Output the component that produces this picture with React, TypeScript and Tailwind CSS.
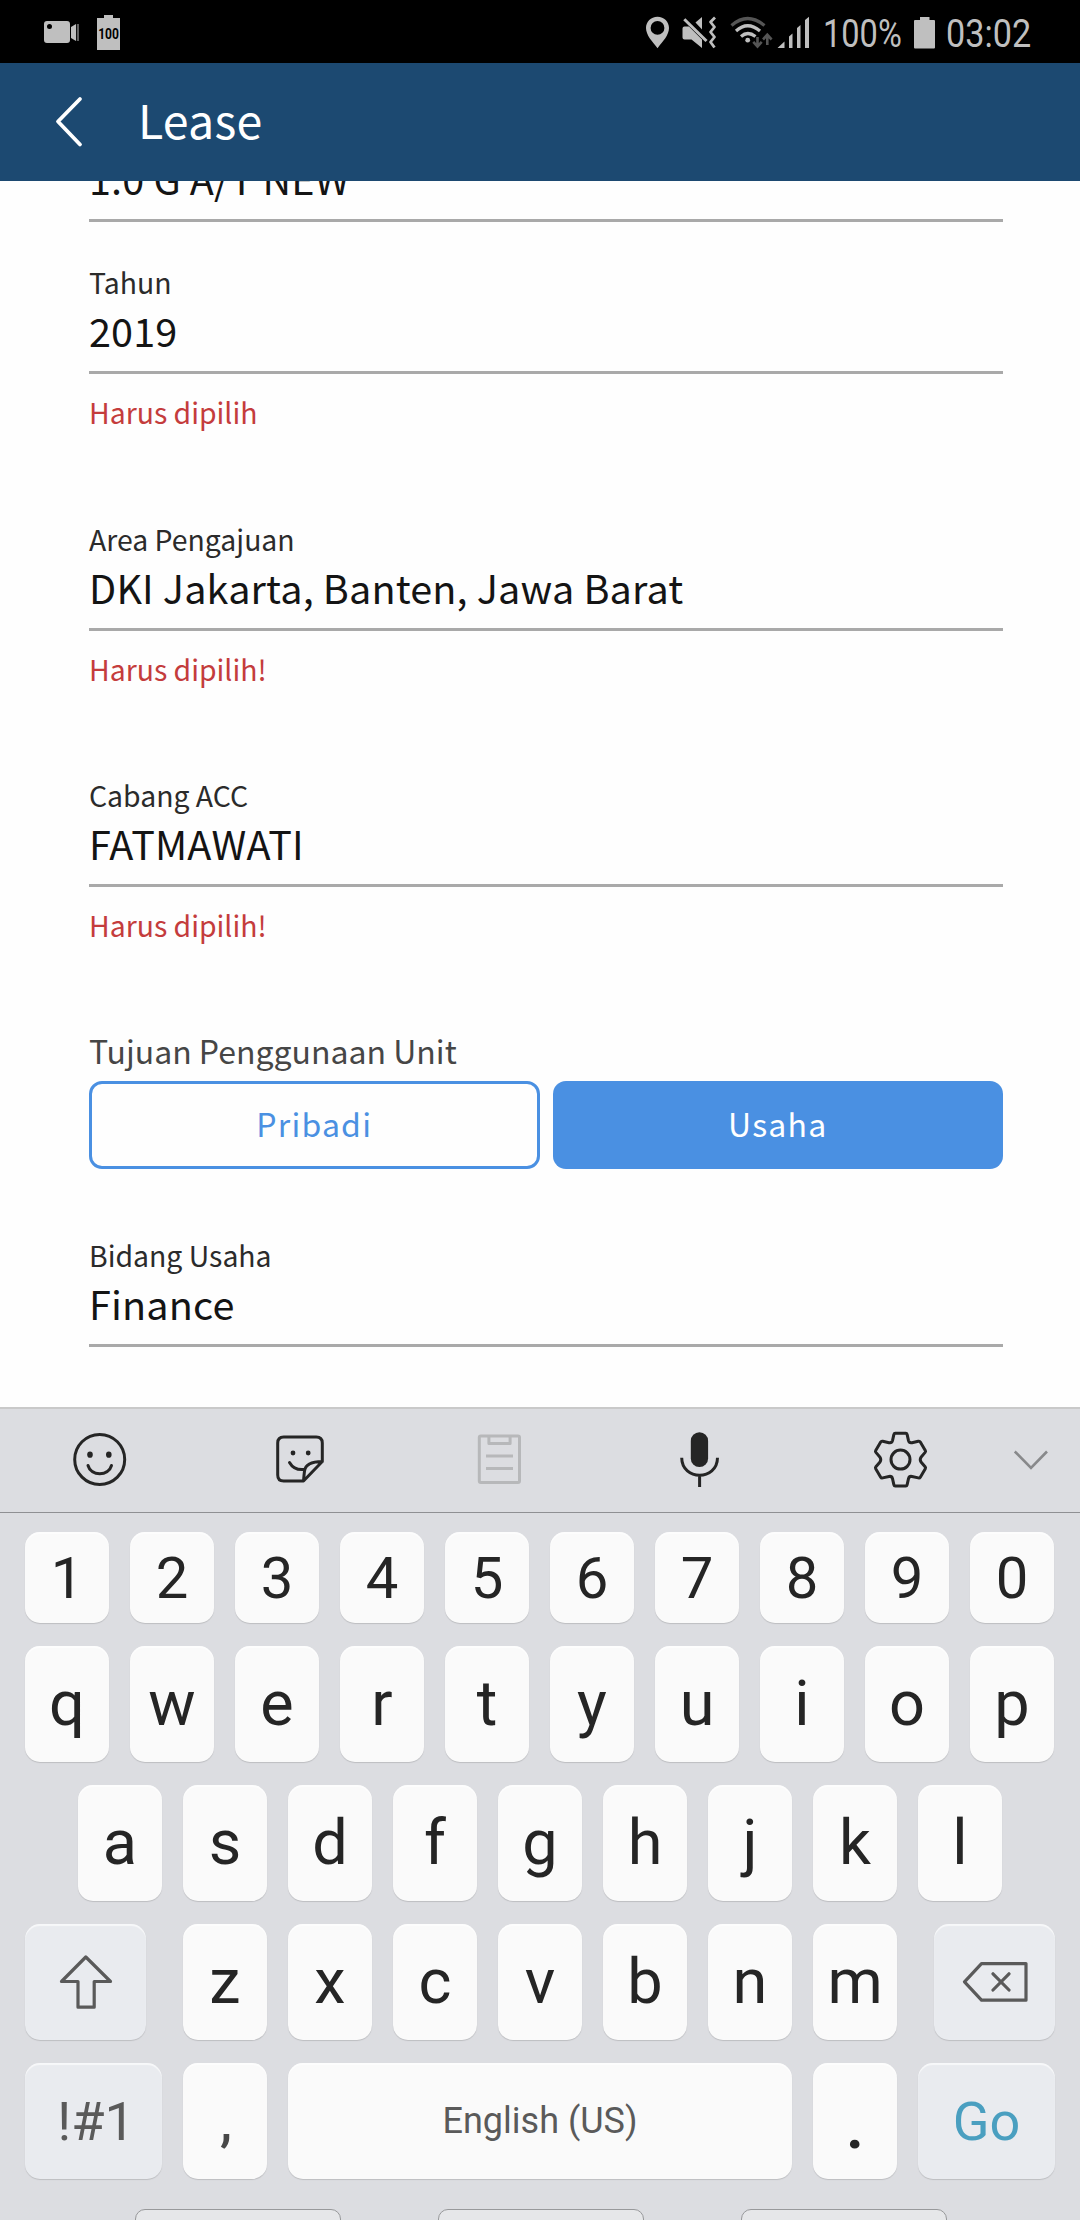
import React from 'react';
import type { ReactNode } from 'react';

const FIELD_FONT = 'font-["Noto_Sans_CJK_SC",sans-serif]';

function StatusBar() {
  return (
    <div className="flex h-[63px] w-full shrink-0 items-start bg-black text-[#bfbfbf]">
      <svg className="ml-[44px] mt-[15px] shrink-0" width="36" height="36" viewBox="0 0 36 36" fill="currentColor">
        <path fillRule="evenodd" d="M3 6H23Q26 6 26 9V25Q26 28 23 28H3Q0 28 0 25V9Q0 6 3 6ZM5.5 9A2.5 2.5 0 1 0 5.5 14A2.5 2.5 0 1 0 5.5 9Z" />
        <path d="M27 12L32 9V26L27 23Z" />
        <path d="M32.8 9H35V26H32.8Z" opacity=".5" />
      </svg>
      <div className="relative ml-[17px] mt-[15px] h-[35px] w-[23px] shrink-0">
        <svg className="absolute inset-0" width="23" height="35" viewBox="0 0 23 35" fill="currentColor">
          <path d="M7 0H16V3H23V35H0V3H7Z" />
        </svg>
        <span className="absolute left-[-8px] top-[9px] w-[39px] scale-x-[.86] text-center font-[Roboto,sans-serif] text-[14px] font-bold leading-[21px] text-black">100</span>
      </div>
      <div className="ml-auto mr-[50px] flex h-[63px] w-[384px] items-start">
        <svg className="mt-[15px] shrink-0" width="177" height="36" viewBox="646 15 177 36" fill="none" stroke="none">
          <path fill="currentColor" fillRule="evenodd" d="M657.5 16.8C650.8 16.8 646 21.8 646 28.1C646 35 652 41.5 657.5 48.2C663 41.5 669 35 669 28.1C669 21.8 664.2 16.8 657.5 16.8ZM657.5 21A6.9 6.9 0 1 1 657.5 34.8A6.9 6.9 0 1 1 657.5 21Z" />
          <path fill="currentColor" d="M684.5 26.5H689L702 39.5V48L691.5 39.5H684.5Q682.5 39.5 682.5 37.5V28.5Q682.5 26.5 684.5 26.5Z" />
          <path fill="currentColor" d="M695.5 22.5L702 17V29.5Z" />
          <path stroke="currentColor" strokeWidth="3" d="M684.3 19.2L706.5 41" />
          <path stroke="currentColor" strokeWidth="2.8" strokeLinejoin="round" d="M715 17.5L710.5 22L714.5 27L710.5 32L714.5 37L710.5 42L714.5 47.5" />
          <g strokeWidth="3.2">
            <path stroke="#555" d="M731.5 25.5Q747.5 11.5 764.5 25.5" />
            <path stroke="currentColor" d="M736 31Q747.5 20.5 760 31" />
            <path stroke="currentColor" d="M741 36.5Q747.7 30.5 755.5 36.5" />
          </g>
          <circle cx="747.7" cy="40.2" r="2.4" fill="currentColor" />
          <path stroke="#555" strokeWidth="2.6" d="M757.5 37V46M753.3 41.8L757.5 46.5L761.7 41.8M767.3 45V35.5M763 39.5L767.3 34.8L771.6 39.5" />
          <path fill="currentColor" d="M777.5 48L784.5 41.5V48ZM789 48V36.5L792.5 33.5V48ZM797 48V28L800.5 25V48ZM805 48V20L809 16.7V48Z" />
        </svg>
        <div className="mt-[9px] w-[84px] shrink-0">
          <span className="block w-[120px] origin-left scale-x-[.835] whitespace-nowrap font-[Roboto,sans-serif] text-[39px] leading-[50px]">100%</span>
        </div>
        <svg className="ml-[7px] mt-[16px] shrink-0" width="21" height="33" viewBox="0 0 21 33" fill="currentColor">
          <path d="M6 1H15.5V4H20Q21 4 21 5V31.5Q21 32.5 20 32.5H1Q0 32.5 0 31.5V5Q0 4 1 4H6Z" />
        </svg>
        <div className="ml-[11px] mt-[9px] w-[84px] shrink-0">
          <span className="block w-[120px] origin-left scale-x-[.877] whitespace-nowrap font-[Roboto,sans-serif] text-[39px] leading-[50px]">03:02</span>
        </div>
      </div>
    </div>
  );
}

function Header() {
  return (
    <header className="flex h-[118px] w-full shrink-0 items-start bg-[#1c4971] text-white">
      <svg className="ml-[52px] mt-[29px] shrink-0" width="34" height="60" viewBox="0 0 34 60" fill="none" stroke="currentColor" strokeWidth="3.8" strokeLinecap="round" strokeLinejoin="round">
        <path d="M28 7L6 29.5L28 52.5" />
      </svg>
      <h1 className={`${FIELD_FONT} ml-[52px] mt-[26px] text-[46.5px] leading-[60px] tracking-[.2px]`}>Lease</h1>
    </header>
  );
}

function Field({ label, value, error, className }: { label: string; value: string; error?: string; className: string }) {
  return (
    <div className={className}>
      <div className="h-[39px] text-[28.4px] leading-[39px] text-[#2b2b2b]">{label}</div>
      <div className="h-[73px] border-b-[3px] border-[#a9a9a9] text-[39.6px] leading-[58px] tracking-[.15px] text-[#141414]">{value}</div>
      {error && <div className="mt-[18px] text-[28.4px] leading-[40px] text-[#c43c3c]">{error}</div>}
    </div>
  );
}

function LeaseForm() {
  return (
    <main className={`${FIELD_FONT} h-[1226px] w-full shrink-0 overflow-hidden bg-[#fefefe] pl-[89px] pr-[77px]`}>
      <div className="-mt-[32px] h-[73px] border-b-[3px] border-[#a9a9a9] text-[39.6px] leading-[58px] tracking-[.15px] text-[#141414]">1.0 G A/T NEW</div>
      <Field className="mt-[40px] h-[257px]" label="Tahun" value="2019" error="Harus dipilih" />
      <Field className="h-[256px]" label="Area Pengajuan" value="DKI Jakarta, Banten, Jawa Barat" error="Harus dipilih!" />
      <Field className="h-[253px]" label="Cabang ACC" value="FATMAWATI" error="Harus dipilih!" />
      <div className="text-[32px] leading-[44px] text-[#464646]">Tujuan Penggunaan Unit</div>
      <div className="mt-[9px] grid h-[88px] grid-cols-2 gap-[13px] text-[32px] tracking-[1.2px]">
        <button className="rounded-[13px] border-[3px] border-[#4a90e2] pb-[4px] text-[#4a90e2]">Pribadi</button>
        <button className="rounded-[13px] bg-[#4a90e2] pb-[4px] text-white">Usaha</button>
      </div>
      <Field className="mt-[66px]" label="Bidang Usaha" value="Finance" />
    </main>
  );
}

function ToolbarIcon({ children, className }: { children: ReactNode; className: string }) {
  return (
    <div className="flex w-[200px] shrink-0 justify-center">
      <svg className={className} width="60" height="60" viewBox="0 0 60 60" fill="none" stroke="currentColor" strokeWidth="3" strokeLinecap="round" strokeLinejoin="round">
        {children}
      </svg>
    </div>
  );
}

function Toolbar() {
  return (
    <div className="flex h-[106px] w-full border-b border-t-2 border-b-[#8f9093] border-t-[#c9c9c9] pt-[21px]">
      <ToolbarIcon className="text-[#252525]">
        <circle cx="29.7" cy="29.4" r="25" />
        <ellipse cx="20" cy="24.7" rx="2.8" ry="3.1" fill="currentColor" stroke="none" />
        <ellipse cx="38.8" cy="24.7" rx="2.8" ry="3.1" fill="currentColor" stroke="none" />
        <path d="M18 35.5C21 46.5 38.5 46.5 41.5 35.5" />
      </ToolbarIcon>
      <ToolbarIcon className="text-[#252525]">
        <path d="M52.3 31.5V13Q52.3 7 46.3 7H13.7Q7.7 7 7.7 13V45Q7.7 51 13.7 51H33.5L52.3 31.5C42 31.5 35.5 34 34.5 41Q34 45 33.5 51" />
        <circle cx="23" cy="23" r="2.4" fill="currentColor" stroke="none" />
        <circle cx="38.2" cy="23" r="2.4" fill="currentColor" stroke="none" />
        <path d="M19.5 32.5Q24 40.5 34 39.5" />
      </ToolbarIcon>
      <ToolbarIcon className="text-[#b7b8ba]">
        <rect x="9.3" y="6" width="40.2" height="46.5" rx="1.5" />
        <path strokeLinecap="butt" d="M18.9 6V13.5H40.1V6M16 26H43M16 38.5H43" />
      </ToolbarIcon>
      <ToolbarIcon className="text-[#252525]">
        <rect x="20.8" y="2.3" width="17.3" height="34.7" rx="8.6" fill="currentColor" stroke="none" />
        <path strokeLinecap="butt" d="M11.7 27.7C12 51 47.2 51 47.5 27.7M29.6 45V57" />
      </ToolbarIcon>
      <ToolbarIcon className="text-[#252525]">
        <g transform="translate(30.5 29.6)">
          <path d="M-5.3 -26.3H5.3Q6.3 -26.3 6.6 -25.2L8 -19Q8.8 -16.3 11.5 -16.9L17.8 -18.3Q19.2 -18.6 19.8 -17.6L24.8 -9.2Q25.4 -8.2 24.6 -7.2L20.5 -2.4Q19 0 20.5 2.4L24.6 7.2Q25.4 8.2 24.8 9.2L19.8 17.6Q19.2 18.6 17.8 18.3L11.5 16.9Q8.8 16.3 8 19L6.6 25.2Q6.3 26.3 5.3 26.3H-5.3Q-6.3 26.3 -6.6 25.2L-8 19Q-8.8 16.3 -11.5 16.9L-17.8 18.3Q-19.2 18.6 -19.8 17.6L-24.8 9.2Q-25.4 8.2 -24.6 7.2L-20.5 2.4Q-19 0 -20.5 -2.4L-24.6 -7.2Q-25.4 -8.2 -24.8 -9.2L-19.8 -17.6Q-19.2 -18.6 -17.8 -18.3L-11.5 -16.9Q-8.8 -16.3 -8 -19L-6.6 -25.2Q-6.3 -26.3 -5.3 -26.3Z" />
          <circle r="9.5" />
        </g>
      </ToolbarIcon>
      <svg className="shrink-0 text-[#88898b]" width="62" height="60" viewBox="0 0 62 60" fill="none" stroke="currentColor" strokeWidth="2.6">
        <path d="M14.8 21.5L31 38L47 21.5" />
      </svg>
    </div>
  );
}

function Key({ children, className = 'w-[84px] bg-[#fafafa] text-[63px] text-[#252525]' }: { children: ReactNode; className?: string }) {
  return (
    <button className={`flex h-full shrink-0 items-center justify-center rounded-[15px] shadow-[inset_0_2px_1px_rgba(255,255,255,.65),0_1px_1px_rgba(0,0,0,.14)] ${className}`}>
      {children}
    </button>
  );
}

function Letters({ letters }: { letters: string }) {
  return (
    <div className="flex h-full gap-[21px]">
      {letters.split('').map((letter) => (
        <Key key={letter}>
          <span className="leading-[74px]">{letter}</span>
        </Key>
      ))}
    </div>
  );
}

function Keyboard() {
  return (
    <section className="h-[813px] w-full shrink-0 overflow-hidden bg-[#dcdde1] font-[Roboto,sans-serif]">
      <Toolbar />
      <div className="mt-[19px] flex flex-col gap-[23px] pl-[25px]">
        <div className="flex h-[91px] gap-[21px]">
          {'1234567890'.split('').map((digit) => (
            <Key key={digit} className="w-[84px] bg-[#fafafa] text-[58px] text-[#252525]">
              <span className="leading-[68px]">{digit}</span>
            </Key>
          ))}
        </div>
        <div className="h-[116px]">
          <Letters letters="qwertyuiop" />
        </div>
        <div className="h-[116px] pl-[53px]">
          <Letters letters="asdfghjkl" />
        </div>
        <div className="flex h-[116px] gap-[37px]">
          <Key className="w-[121px] bg-[#e9ebef] text-[#5a5a5a]">
            <svg width="60" height="60" viewBox="0 0 60 60" fill="none" stroke="currentColor" strokeWidth="3.2" strokeLinejoin="round">
              <path d="M29.8 5L5.5 29.5H22V55.2H38.2V29.5H54.5Z" />
            </svg>
          </Key>
          <Letters letters="zxcvbnm" />
          <Key className="w-[121px] bg-[#e9ebef] text-[#5a5a5a]">
            <svg width="70" height="60" viewBox="0 0 70 60" fill="none" stroke="currentColor" strokeWidth="3.2" strokeLinejoin="round" strokeLinecap="round">
              <path d="M4.5 29.8L21.5 11.6H66V48.2H21.5ZM33 21.8L49 38M49 21.8L33 38" />
            </svg>
          </Key>
        </div>
        <div className="flex h-[116px] gap-[21px]">
          <Key className="w-[137px] bg-[#e9ebef] pl-[5px] text-[54px] text-[#5a5a5a]">
            <span>!#1</span>
          </Key>
          <Key className="w-[84px] bg-[#fafafa] pl-[2px] text-[54px] font-medium text-[#484848]">
            <span>,</span>
          </Key>
          <Key className="w-[504px] bg-[#fafafa] text-[36px] text-[#5a5a5a]">
            <span>English (US)</span>
          </Key>
          <Key className="w-[84px] bg-[#fafafa] pt-[14px] text-[60px] font-bold text-[#252525]">
            <span>.</span>
          </Key>
          <Key className="w-[137px] bg-[#e9ebef] text-[54px] text-[#4a9fc0]">
            <span>Go</span>
          </Key>
        </div>
      </div>
      <div className="mt-[30px] flex gap-[97px] pl-[135px]">
        {[0, 1, 2].map((slot) => (
          <div key={slot} className="h-[40px] w-[206px] rounded-[10px] border-[1.5px] border-[#98999b] bg-[#e6e7e9]" />
        ))}
      </div>
    </section>
  );
}

export default function App() {
  return (
    <div className="flex h-[2220px] w-[1080px] flex-col overflow-hidden bg-white">
      <StatusBar />
      <Header />
      <LeaseForm />
      <Keyboard />
    </div>
  );
}
